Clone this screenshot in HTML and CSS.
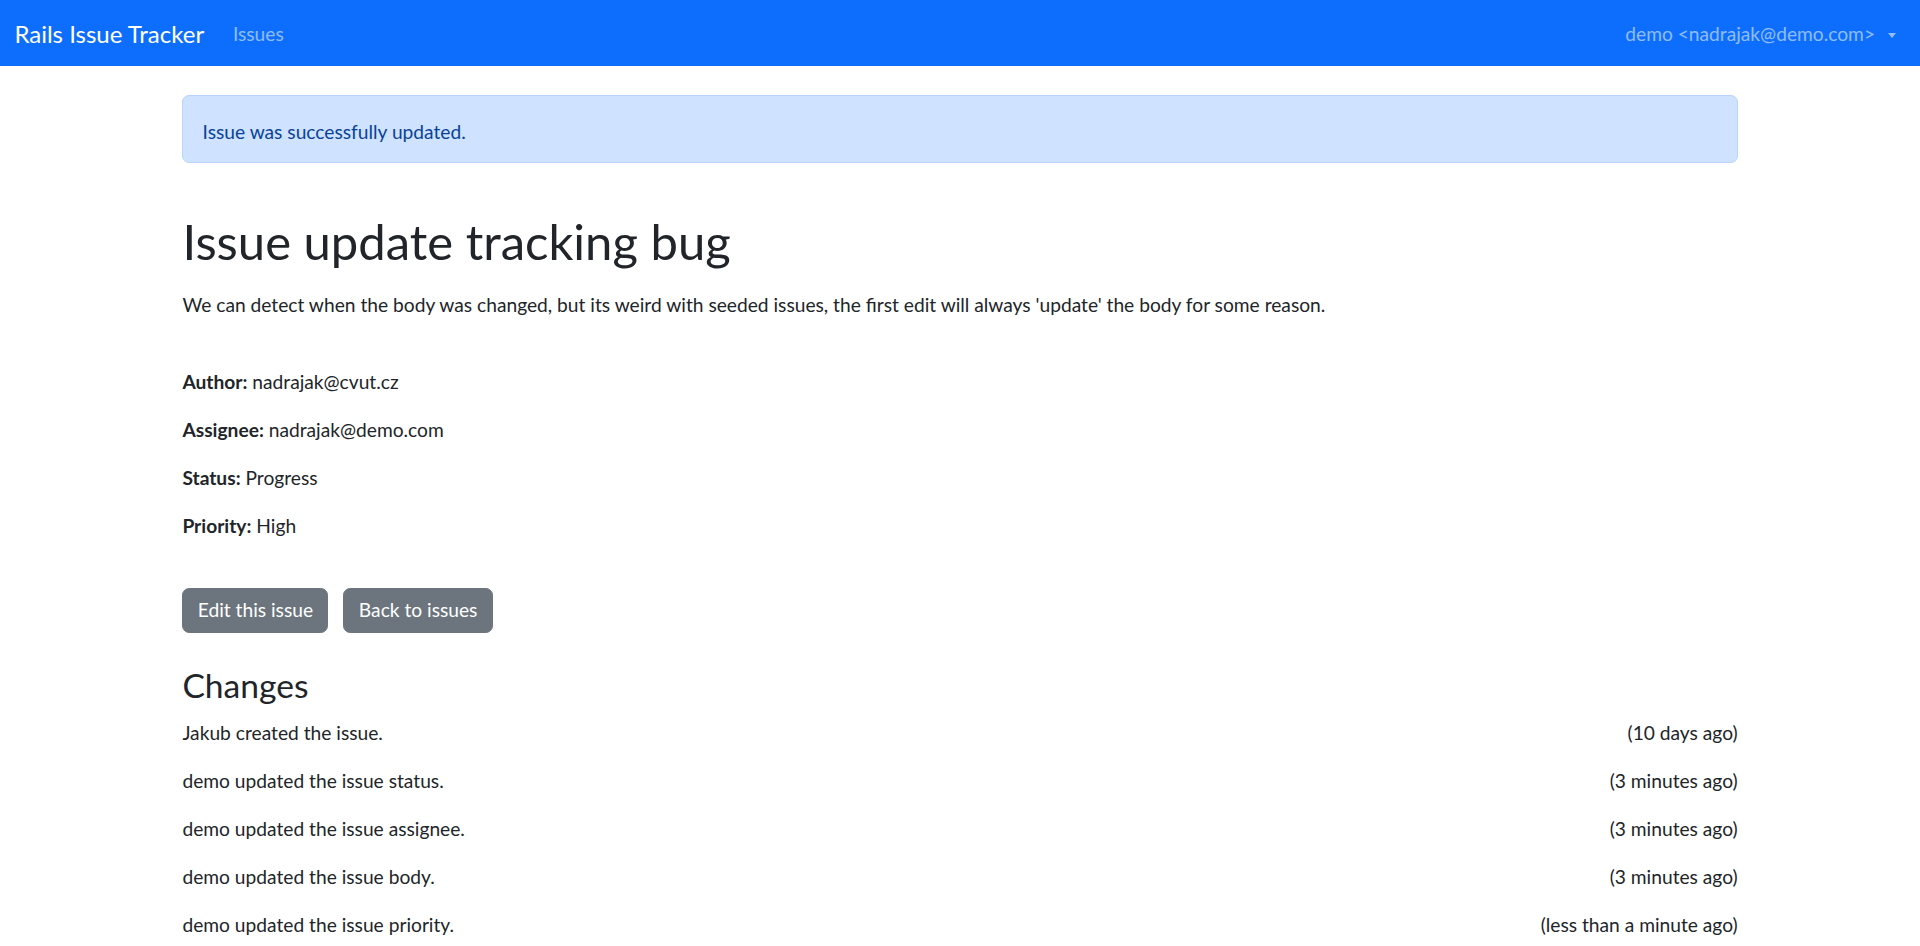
FILE: index.html
```html
<!DOCTYPE html>
<html lang="en">
<head>
<meta charset="utf-8">
<title>Rails Issue Tracker</title>
<link rel="stylesheet" href="styles.css">
</head>
<body>
<nav class="navbar">
  <div class="nav-inner">
    <a class="brand" href="#">Rails Issue Tracker</a>
    <ul class="nav-links">
      <li><a class="nav-link" href="#">Issues</a></li>
    </ul>
    <div class="user-menu">
      <a class="nav-link dropdown-toggle" href="#">demo &lt;nadrajak@demo.com&gt;</a>
    </div>
  </div>
</nav>
<main class="container">
  <div class="alert">Issue was successfully updated.</div>
  <h1 class="title">Issue update tracking bug</h1>
  <p class="body-text">We can detect when the body was changed, but its weird with seeded issues, the first edit will always 'update' the body for some reason.</p>
  <div class="meta">
    <p><strong>Author:</strong> nadrajak@cvut.cz</p>
    <p><strong>Assignee:</strong> nadrajak@demo.com</p>
    <p><strong>Status:</strong> Progress</p>
    <p><strong>Priority:</strong> High</p>
  </div>
  <div class="actions">
    <a class="btn" href="#">Edit this issue</a>
    <a class="btn" href="#">Back to issues</a>
  </div>
  <h3 class="section-title">Changes</h3>
  <div class="changes">
    <div class="change"><span>Jakub created the issue.</span><span>(10 days ago)</span></div>
    <div class="change"><span>demo updated the issue status.</span><span>(3 minutes ago)</span></div>
    <div class="change"><span>demo updated the issue assignee.</span><span>(3 minutes ago)</span></div>
    <div class="change"><span>demo updated the issue body.</span><span>(3 minutes ago)</span></div>
    <div class="change"><span>demo updated the issue priority.</span><span>(less than a minute ago)</span></div>
  </div>
</main>
</body>
</html>
```
FILE: styles.css
```css
html {
  font-size: 19.2px;
}
* {
  box-sizing: border-box;
}
body {
  margin: 0;
  font-family: Lato, "Noto Sans", sans-serif;
  font-size: 1rem;
  line-height: 1.5;
  color: #212529;
  background: #fff;
}
a {
  text-decoration: none;
}
.navbar {
  background: #0d6efd;
  height: 66px;
  padding: 2px 14.4px 0;
  display: flex;
  align-items: center;
}
.nav-inner {
  display: flex;
  align-items: center;
  width: 100%;
}
.brand {
  color: #fff;
  font-size: 1.25rem;
  line-height: 1.5;
  margin-right: 1rem;
}
.nav-links {
  list-style: none;
  margin: 0;
  padding: 0;
  display: flex;
}
.nav-link {
  display: block;
  color: rgba(255, 255, 255, 0.55);
  padding: 0.5rem;
}
.user-menu {
  margin-left: auto;
}
.dropdown-toggle::after {
  content: "";
  display: inline-block;
  margin-left: 13px;
  vertical-align: 3px;
  border-top: 5px solid;
  border-right: 4.5px solid transparent;
  border-left: 4.5px solid transparent;
  border-bottom: 0;
}
.container {
  width: 1584px;
  margin: 0 auto;
  padding: 0 14.4px;
}
.alert {
  margin-top: 1.5rem;
  padding: 22.4px 1rem 14.8px;
  color: #084298;
  background: #cfe2ff;
  border: 1px solid #b6d4fe;
  border-radius: 0.375rem;
}
.title {
  font-size: 49px;
  font-weight: 400;
  line-height: 1.2;
  margin: 49.4px 0 19.8px;
}
p {
  margin: 0 0 1rem;
}
.meta {
  margin-top: 2.5rem;
}
strong {
  font-weight: 700;
}
.actions {
  display: flex;
  gap: 15px;
  margin-top: 47.2px;
}
.btn {
  display: inline-block;
  background: #6c757d;
  color: #fff;
  border: 1px solid #6c757d;
  border-radius: 0.375rem;
  padding: 0.375rem 0.75rem;
  line-height: 1.5;
}
.section-title {
  font-size: 1.75rem;
  font-weight: 400;
  line-height: 1.2;
  margin: 32.8px 0 13.2px;
}
.change {
  display: flex;
  justify-content: space-between;
  margin-bottom: 1rem;
}
```
